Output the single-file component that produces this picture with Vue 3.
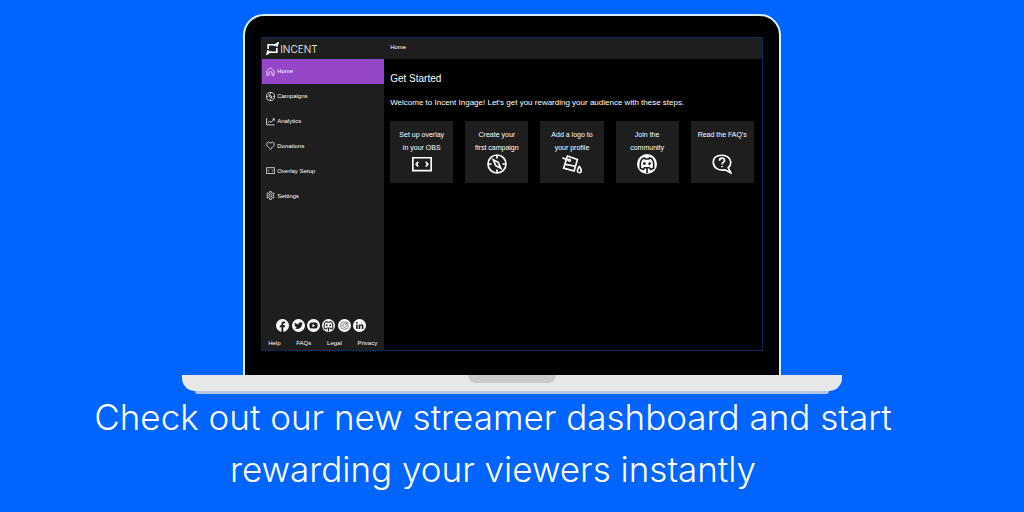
<script setup>
const nav = [
  { label: 'Home', icon: 'home' },
  { label: 'Campaigns', icon: 'compass' },
  { label: 'Analytics', icon: 'chart' },
  { label: 'Donations', icon: 'heart' },
  { label: 'Overlay Setup', icon: 'overlay' },
  { label: 'Settings', icon: 'gear' },
]
const steps = [
  { lines: ['Set up overlay', 'in your OBS'], icon: 'overlay' },
  { lines: ['Create your', 'first campaign'], icon: 'compass' },
  { lines: ['Add a logo to', 'your profile'], icon: 'paint' },
  { lines: ['Join the', 'community'], icon: 'discord' },
  { lines: ["Read the FAQ's"], icon: 'faq' },
]
const socials = ['facebook', 'twitter', 'youtube', 'discord', 'instagram', 'linkedin']
const links = ['Help', 'FAQs', 'Legal', 'Privacy']
</script>

<template>
  <svg class="defs" aria-hidden="true">
    <symbol id="home" viewBox="0 0 24 24"><path d="M2.500 10.500 12 2l9.500 8.500V22H16v-6a4 4 0 0 0-8 0v6H2.500z" /></symbol>
    <symbol id="compass" viewBox="0 0 24 24"><circle cx="12" cy="12" r="10.800" /><path d="M12 1.500v4M12 18.500v4M1.500 12h4M18.500 12h4M7.500 7l6 3 3 7-6-3z" /></symbol>
    <symbol id="chart" viewBox="0 0 24 24"><path d="M1.500 3v18H23M5 16l5-5 4 3 8-9M17 5h5v5" /></symbol>
    <symbol id="heart" viewBox="0 0 24 24"><path d="M12 21.500C6 16.500 2 13 2 8.500 2 5 4.500 3 7 3c2.300 0 4 1.300 5 3.500C13 4.300 14.700 3 17 3c2.500 0 5 2 5 5.500 0 4.500-4 8-10 13z" /></symbol>
    <symbol id="overlay" viewBox="0 0 24 24"><path d="M1 4.500h22v15.500H1zM7.500 9.500 5 12.200l2.500 2.800M16.500 9.500l2.500 2.700-2.500 2.800" /></symbol>
    <symbol id="gear" viewBox="0 0 24 24"><path d="M9.500 4.500 10 1.500h4l.5 3 2.500 1.500 3-1 2 3.500-2.500 2v3l2.500 2-2 3.500-3-1-2.500 1.500-.5 3h-4l-.5-3L7 18l-3 1-2-3.500 2.500-2v-3L2 8.500 4 5l3 1z" /><circle cx="12" cy="12" r="4" /></symbol>
    <symbol id="paint" viewBox="0 0 24 24"><path d="m6.500 2.500 12 4-4 14L2 17l4.500-14.500zM4.500 12.500l11.500 2.200M.5 4.500l8 3.200" /><circle cx="9" cy="7.500" r="1" /><path d="M20.800 15c-3.600 4.500-2.500 7.500 0 7.500s3.600-3 0-7.500z" /></symbol>
    <symbol id="discord" viewBox="0 0 24 24"><circle class="disc" cx="12" cy="12" r="12" /><path class="cut" d="M10 6 9 4.800 6 6C4.800 7.500 4 9.500 4 12v5l3.500 1.500 1.500-2h6l1.500 2L20 17v-5c0-2.500-.8-4.500-2-6l-3-1.200L14 6zM12 17v6" /><circle class="dot" cx="8.800" cy="11.500" r="1.700" /><circle class="dot" cx="15.200" cy="11.500" r="1.700" /></symbol>
    <symbol id="faq" viewBox="0 0 24 24"><path d="M12 1.500c6 0 10.500 3.700 10.500 8.500 0 3-1 5-3 6.500l3 6-7-3.500C7 20.500 1.500 16 1.500 10S6 1.500 12 1.500zM9 8c0-2 1.300-3 3-3s3 1.200 3 2.700C15 10 12 10 12 12.500M12 14.500v1.500" /></symbol>
    <symbol id="facebook" viewBox="0 0 24 24"><circle class="disc" cx="12" cy="12" r="12" /><path class="dot" d="M10 24v-9H7v-3.500h3V9c0-3 1.700-4.500 4.500-4.500L17 4.700V8h-1.700c-1.300 0-1.800.7-1.800 1.800v1.700H17l-.6 3.500h-2.900v9z" /></symbol>
    <symbol id="twitter" viewBox="0 0 24 24"><circle class="disc" cx="12" cy="12" r="12" /><path class="dot" d="M5 6.500c2 2.300 4.200 3.300 7 3.500-.5-3 3-5.500 5.500-3l2-.8-1 2 1.500-.4-1.700 2C18.500 16 13 20.500 4.500 17.500c2 0 3.200-.4 4.500-1.500-1.500-.2-2.500-1-3-2.300h1.300C5.500 13 4.700 11.800 4.700 10l1.400.5C4.500 9.300 4.300 8 5 6.500z" /></symbol>
    <symbol id="youtube" viewBox="0 0 24 24"><circle class="disc" cx="12" cy="12" r="12" /><rect class="dot" x="4.500" y="6.500" width="15" height="11" rx="3.500" /><path class="disc" d="m10 9 5 3-5 3z" /></symbol>
    <symbol id="instagram" viewBox="0 0 24 24"><circle class="disc" cx="12" cy="12" r="12" /><rect class="cut thin" x="5.500" y="5.500" width="13" height="13" rx="3.500" /><circle class="cut thin" cx="12" cy="12" r="3.300" /><circle class="dot" cx="16" cy="8" r="1" /></symbol>
    <symbol id="linkedin" viewBox="0 0 24 24"><circle class="disc" cx="12" cy="12" r="12" /><circle class="dot" cx="7.200" cy="6.800" r="1.700" /><path class="dot" d="M5.700 10h3v8.500h-3zM10.500 10h2.800v1.200c1.500-2.200 6-2 6 2v5.300h-3v-4.700c0-2.300-2.800-2.200-2.800 0v4.700h-3z" /></symbol>
  </svg>

  <main class="stage">
    <div class="laptop">
      <div class="lid">
        <div class="screen">
          <aside class="sidebar">
            <div class="brand">
              <svg class="mark" viewBox="0 0 24 24" aria-hidden="true"><path d="M4 13V5h10l2 1 6-4-2 7M20 11v8H10l-2-1-6 4 2-7" /></svg>
              <span>INCENT</span>
            </div>
            <nav class="nav">
              <a v-for="(n, i) in nav" :key="n.label" href="#" :class="{ active: i === 0 }">
                <svg class="nav-icon" aria-hidden="true"><use :href="'#' + n.icon" /></svg>{{ n.label }}
              </a>
            </nav>
            <div class="socials">
              <a v-for="s in socials" :key="s" href="#" :aria-label="s"><svg aria-hidden="true"><use :href="'#' + s" /></svg></a>
            </div>
            <div class="links">
              <a v-for="l in links" :key="l" href="#">{{ l }}</a>
            </div>
          </aside>
          <section class="main">
            <header class="topbar">Home</header>
            <div class="content">
              <h1>Get Started</h1>
              <p class="intro">Welcome to Incent Ingage! Let's get you rewarding your audience with these steps.</p>
              <div class="cards">
                <a v-for="s in steps" :key="s.icon" href="#" class="card">
                  <span v-for="l in s.lines" :key="l">{{ l }}</span>
                  <svg aria-hidden="true"><use :href="'#' + s.icon" /></svg>
                </a>
              </div>
            </div>
          </section>
        </div>
      </div>
      <div class="base"><div class="notch"></div></div>
    </div>
    <p class="caption">Check out our new streamer dashboard and start<br />rewarding your viewers instantly</p>
  </main>
</template>

<style>
body { margin: 0; background: #0064ff; }
</style>

<style scoped>
* { box-sizing: border-box; }
a { color: inherit; text-decoration: none; }
svg { fill: none; stroke: currentColor; stroke-width: 2; flex: none; }
.defs { position: absolute; width: 0; height: 0; }
.disc { fill: #fff; stroke: none; }
.dot { fill: #1e1e1e; stroke: none; }
.cut { fill: none; stroke: #1e1e1e; stroke-width: 2; }
.thin { stroke-width: 1; }
.stage {
  min-height: 100vh;
  display: flex;
  flex-direction: column;
  align-items: center;
  padding: 14px 0 17px;
  color: #fff;
  font-family: "Liberation Sans", Arial, sans-serif;
}
.laptop { flex: 1; width: 64.5%; display: flex; flex-direction: column; align-items: center; }
.lid {
  flex: 1;
  width: 81.4%;
  display: flex;
  padding: 21px 16px 24px;
  background: #000;
  border: 2px solid #d6efff;
  border-bottom: 0;
  border-radius: 21px 21px 0 0;
}
.screen { flex: 1; display: flex; min-width: 0; border: 1px solid #082a5c; }
.sidebar { width: 122px; display: flex; flex-direction: column; background: #1e1e1e; }
.brand { height: 21px; display: flex; align-items: center; gap: 1px; padding-left: 4px; font-size: 10px; }
.mark { width: 13px; height: 13px; stroke-width: 3; }
.brand span { font-family: Inter, "Liberation Sans", sans-serif; font-weight: 300; }
.nav { height: 149px; display: flex; flex-direction: column; }
.nav a { flex: 1; display: flex; align-items: center; gap: 2px; padding-left: 4px; font-size: 6px; }
.nav a.active { background: #9646c8; }
.nav-icon { width: 9px; height: 9px; }
.socials { margin-top: auto; display: flex; justify-content: space-between; padding: 0 18px 0 14px; }
.socials a, .socials svg { display: block; width: 13px; height: 13px; }
.links { display: flex; justify-content: space-between; padding: 7px 7px 3px 6px; font-size: 6px; line-height: 8px; }
.main { flex: 1; min-width: 0; }
.topbar { height: 21px; padding-left: 6px; background: #1e1e1e; font-size: 6px; line-height: 19px; }
.content { padding: 13px 8px 12px 6px; }
h1 { margin: 0; font-size: 10px; line-height: 14px; font-weight: 400; }
.intro { margin: 12px 0 13px; font-size: 8px; line-height: 10px; }
.cards { display: grid; grid-template-columns: repeat(5, 1fr); gap: 12px; }
.card {
  height: 62px;
  display: flex;
  flex-direction: column;
  align-items: center;
  padding: 7px 0 9px;
  background: #1e1e1e;
  font-size: 7px;
  line-height: 13px;
  white-space: nowrap;
}
.card svg { width: 20px; height: 20px; margin-top: auto; }
.base { position: relative; width: 100%; height: 16px; background: #e8e8e8; border-radius: 0 0 13px 13px; }
.base::after {
  content: "";
  position: absolute;
  left: 2%;
  right: 2%;
  top: 100%;
  height: 3px;
  background: #b9c6e2;
  border-radius: 0 0 8px 8px;
}
.notch { width: 88px; height: 8px; margin: 0 auto; background: #c9c9cb; border-radius: 0 0 9px 9px; }
.caption {
  margin: 0;
  padding-right: 38px;
  font-family: Inter, "Liberation Sans", sans-serif;
  font-size: 35px;
  font-weight: 300;
  line-height: 52px;
  text-align: center;
}
</style>
